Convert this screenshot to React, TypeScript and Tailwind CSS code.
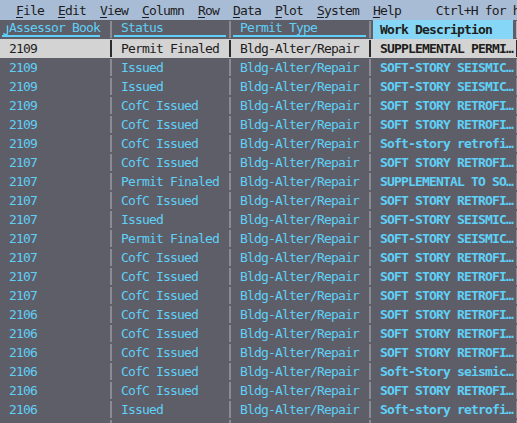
import React from "react";

const rows: [string, string, string][] = [
  ["2109", "Permit Finaled", "SUPPLEMENTAL PERMI…"],
  ["2109", "Issued", "SOFT-STORY SEISMIC…"],
  ["2109", "Issued", "SOFT-STORY SEISMIC…"],
  ["2109", "CofC Issued", "SOFT STORY RETROFI…"],
  ["2109", "CofC Issued", "SOFT STORY RETROFI…"],
  ["2109", "CofC Issued", "Soft-story retrofi…"],
  ["2107", "CofC Issued", "SOFT STORY RETROFI…"],
  ["2107", "Permit Finaled", "SUPPLEMENTAL TO SO…"],
  ["2107", "CofC Issued", "SOFT STORY RETROFI…"],
  ["2107", "Issued", "SOFT-STORY SEISMIC…"],
  ["2107", "Permit Finaled", "SOFT-STORY SEISMIC…"],
  ["2107", "CofC Issued", "SOFT STORY RETROFI…"],
  ["2107", "CofC Issued", "SOFT STORY RETROFI…"],
  ["2107", "CofC Issued", "SOFT STORY RETROFI…"],
  ["2106", "CofC Issued", "SOFT STORY RETROFI…"],
  ["2106", "CofC Issued", "SOFT STORY RETROFI…"],
  ["2106", "CofC Issued", "SOFT STORY RETROFI…"],
  ["2106", "CofC Issued", "Soft-Story seismic…"],
  ["2106", "CofC Issued", "SOFT STORY RETROFI…"],
  ["2106", "Issued", "Soft-story retrofi…"],
];

const menu = ["File", "Edit", "View", "Column", "Row", "Data", "Plot", "System", "Help"];

function Sep({ color = "bg-[#8b8b94]" }: { color?: string }) {
  return (
    <div className="flex h-full w-[7px] shrink-0 justify-center py-px">
      <div className={`w-[2px] ${color}`} />
    </div>
  );
}

function KeyMark() {
  return (
    <svg width="7" height="17" viewBox="0 0 7 17" className="shrink-0">
      <path d="M5.5 6.5v7.5q0 1.5-1.5 1.5h-1q-1 0-1.5-1.5" fill="none" stroke="currentColor" strokeWidth="1.4" />
    </svg>
  );
}

function Row({ book, status, desc, selected }: { book: string; status: string; desc: string; selected?: boolean }) {
  const sep = selected ? "bg-[#2b2b2e]" : "bg-[#8b8b94]";
  return (
    <div
      className={`flex h-[19px] shrink-0 items-center pl-[2px] whitespace-pre ${
        selected ? "bg-[#d3d3d3] text-[#1e1e20]" : "text-[#5fd0f7]"
      }`}
    >
      <div className="w-[105px] shrink-0 pl-[7px]">{book}</div>
      <Sep color={sep} />
      <div className="w-[112px] shrink-0 pl-[7px]">{status}</div>
      <Sep color={sep} />
      <div className="w-[133px] shrink-0 pl-[7px]">{book && "Bldg-Alter/Repair"}</div>
      <Sep color={sep} />
      <div className="w-[140px] shrink-0 pl-[7px] font-bold">{desc}</div>
      <Sep color={sep} />
    </div>
  );
}

export default function App() {
  return (
    <div className="flex h-[423px] w-[517px] flex-col overflow-hidden bg-[#5e5e68] font-['DejaVu_Sans_Mono',monospace] text-[13px] leading-none tracking-[-0.83px]">
      <div className="flex h-[20px] shrink-0 items-center whitespace-pre bg-[#a9bcd6] pl-[2px] text-[#1c1c22]">
        <span>{"  "}</span>
        {menu.map((m) => (
          <span key={m}>
            <span className="underline underline-offset-2">{m[0]}</span>
            {m.slice(1) + "  "}
          </span>
        ))}
        <span>{"   Ctrl+H for help menu"}</span>
      </div>

      <div className="flex h-[19px] shrink-0 pl-[2px] whitespace-pre text-[#5fd0f7]">
        <div className="w-[105px] shrink-0">
          <div className="flex h-[17px] w-[98px] items-center border-b-2 border-[#5fd0f7]">
            <KeyMark />
            <span>Assessor Book</span>
          </div>
        </div>
        <Sep />
        <div className="w-[112px] shrink-0">
          <div className="flex h-[17px] items-center border-b-2 border-[#5fd0f7] pl-[7px]">Status</div>
        </div>
        <Sep />
        <div className="w-[133px] shrink-0">
          <div className="flex h-[17px] items-center border-b-2 border-[#5fd0f7] pl-[7px]">Permit Type</div>
        </div>
        <Sep />
        <div className="flex w-[140px] shrink-0 items-center bg-[#86d7f7] pl-[7px] font-bold text-[#1e1e20]">
          Work Description
        </div>
        <Sep color="bg-[#b4b4bc]" />
      </div>

      {rows.map((r, i) => (
        <Row key={i} book={r[0]} status={r[1]} desc={r[2]} selected={i === 0} />
      ))}
      <Row book="" status="" desc="" />
    </div>
  );
}
